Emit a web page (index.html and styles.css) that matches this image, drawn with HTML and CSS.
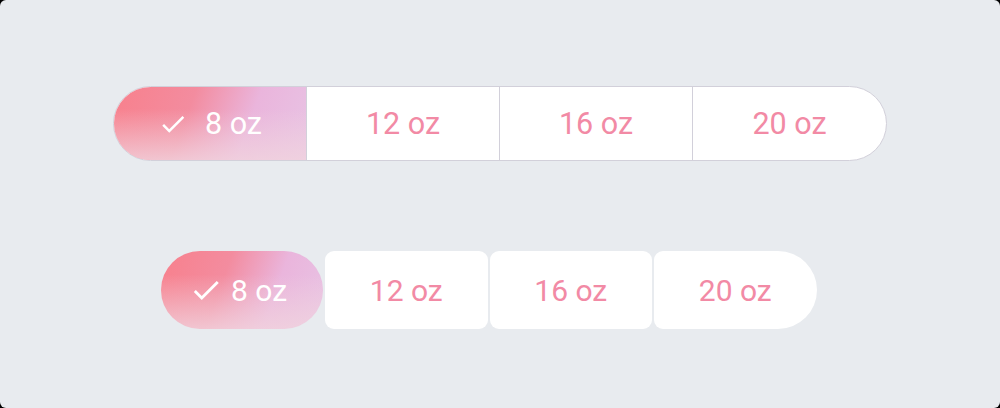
FILE: index.html
```html
<!DOCTYPE html>
<html>
<head>
<meta charset="utf-8">
<link rel="stylesheet" href="styles.css">
</head>
<body>
<div class="page">
  <div class="segmented">
    <div class="seg seg-selected">
      <svg class="check" viewBox="0 0 24 24"><path d="M9 16.17L4.83 12l-1.42 1.41L9 19 21 7l-1.41-1.41z"/></svg>
      <span>8 oz</span>
    </div>
    <div class="seg">12 oz</div>
    <div class="seg">16 oz</div>
    <div class="seg">20 oz</div>
  </div>
  <div class="chips">
    <div class="chip chip-selected chip-first">
      <svg class="check check-sm" viewBox="0 0 24 24"><path d="M9 16.17L4.83 12l-1.42 1.41L9 19 21 7l-1.41-1.41z"/></svg>
      <span>8 oz</span>
    </div>
    <div class="chip">12 oz</div>
    <div class="chip">16 oz</div>
    <div class="chip chip-last">20 oz</div>
  </div>
</div>
</body>
</html>
```

FILE: styles.css
```css
html, body {
  margin: 0;
  padding: 0;
  background: #000;
}
.page {
  width: 1000px;
  height: 408px;
  box-sizing: border-box;
  background: #e8ebef;
  border-radius: 6px;
  padding-top: 86px;
  font-family: Roboto, "Liberation Sans", sans-serif;
  display: flex;
  flex-direction: column;
}
.segmented {
  margin-left: 113px;
  width: 774px;
  height: 75px;
  box-sizing: border-box;
  border: 1px solid #d2d0da;
  border-radius: 38px;
  overflow: hidden;
  display: grid;
  grid-template-columns: 192px 193px 193px 1fr;
  background: #fff;
}
.seg {
  display: flex;
  align-items: center;
  justify-content: center;
  font-size: 30.5px;
  color: #f28aa5;
  border-left: 1px solid #d2d0da;
}
.seg:first-child {
  border-left: none;
}
.seg-selected {
  gap: 17px;
}
.check {
  width: 30px;
  height: 30px;
  fill: #fff;
}
.chips {
  margin-top: 90px;
  margin-left: 161px;
  display: flex;
  gap: 2px;
}
.chip {
  flex: none;
  width: 162.5px;
  height: 78px;
  box-sizing: border-box;
  border-radius: 9px;
  background: #fff;
  display: flex;
  align-items: center;
  justify-content: center;
  font-size: 30px;
  color: #f28aa5;
}
.chip-first {
  width: 162px;
  border-radius: 39px;
  gap: 8px;
  padding-right: 8px;
}
.check-sm {
  width: 34px;
  height: 34px;
}
.chip-last {
  border-radius: 9px 39px 39px 9px;
}
.seg.seg-selected, .chip.chip-selected {
  color: #fff;
  background:
    linear-gradient(to top, rgba(241, 212, 222, 0.8) 0%, rgba(241, 212, 222, 0) 70%),
    linear-gradient(110deg, #f8808c 0%, #f38c9f 38%, #eab5dc 68%, #e8c3e4 100%);
}
```
